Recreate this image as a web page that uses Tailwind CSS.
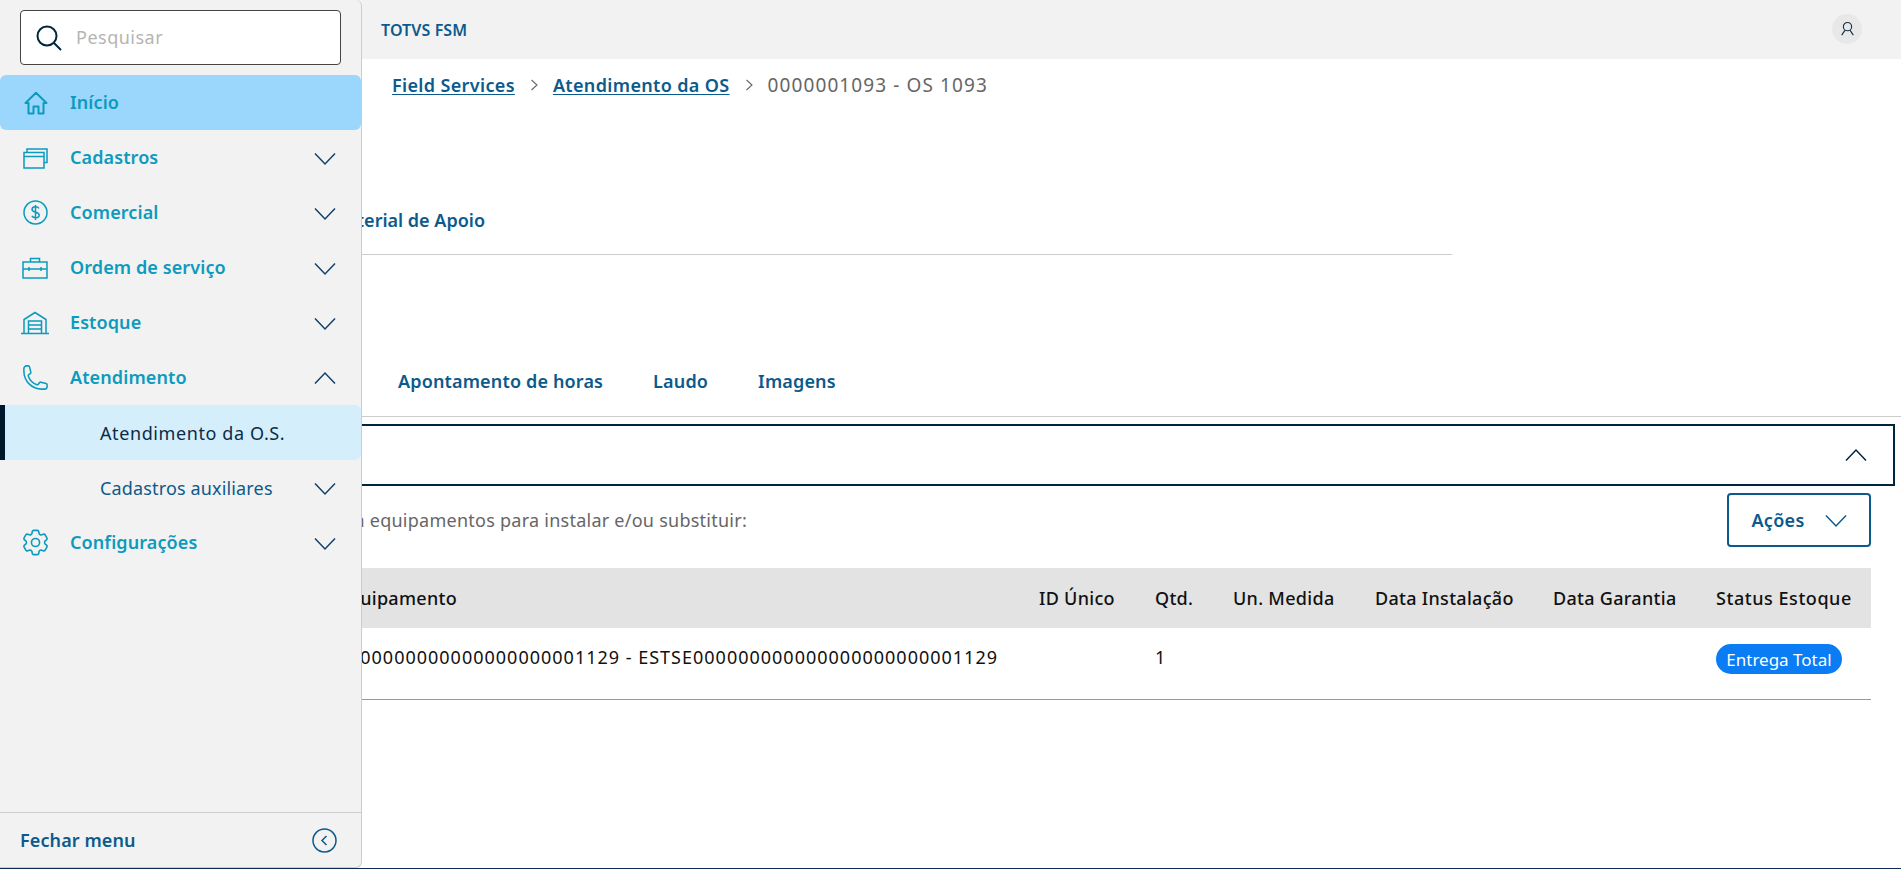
<!DOCTYPE html>
<html lang="pt-BR">
<head>
    <meta charset="UTF-8">
    <meta name="viewport" content="width=device-width, initial-scale=1.0">
    <title>TOTVS FSM</title>
    <script src="https://cdn.jsdelivr.net/npm/@tailwindcss/browser@4"></script>
</head>
<body class="relative h-screen overflow-hidden bg-white font-['Noto_Sans',sans-serif] text-[16px] text-[#111]">

    <!-- conteudo da pagina -->
    <div class="flex h-[868px] flex-col overflow-hidden">
        <header class="flex h-[59px] shrink-0 items-center justify-between bg-[#f2f2f2] pl-[381px] pr-[39px]">
            <span class="text-[16px] font-semibold tracking-[0.1px] text-[#0c5a8c]">TOTVS FSM</span>
            <div class="mb-[2px] flex h-[30px] w-[30px] items-center justify-center rounded-full bg-[#e8e8e8]">
                <svg class="h-[15px] w-[15px]" viewBox="0 0 16 16" fill="none" stroke="#12304a" stroke-width="1.2"><circle cx="8" cy="6" r="4.4"/><path d="M1.800 15 5.200 10M14.200 15 10.800 10"/></svg>
            </div>
        </header>

        <nav class="flex h-[52px] shrink-0 items-center pl-[392px] text-[18px]">
            <a class="font-semibold tracking-[0.35px] text-[#0c5a8c] underline underline-offset-2">Field Services</a>
            <svg class="mx-[14px] h-[12px] w-[10px]" viewBox="0 0 10 12" fill="none" stroke="#666" stroke-width="1.1"><path d="M2.500 1 8 6l-5.500 5"/></svg>
            <a class="font-semibold tracking-[0.35px] text-[#0c5a8c] underline underline-offset-2">Atendimento da OS</a>
            <svg class="mx-[14px] h-[12px] w-[10px]" viewBox="0 0 10 12" fill="none" stroke="#666" stroke-width="1.1"><path d="M2.500 1 8 6l-5.500 5"/></svg>
            <span class="text-[19px] tracking-[1.1px] text-[#666]">0000001093 - OS 1093</span>
        </nav>

        <div class="h-[144px] w-[1452px] shrink-0 border-b border-[#ccc]">
            <div class="flex h-[121px] w-[485px] items-end justify-end">
                <span class="text-[18px] font-semibold leading-[24px] whitespace-nowrap text-[#0c5a8c]">Material de Apoio</span>
            </div>
        </div>

        <div class="flex h-[162px] shrink-0 items-end border-b border-[#ccc] pb-[23px] pl-[398px] text-[18px] font-semibold leading-[24px] tracking-[0.15px] text-[#0c5a8c]">
            <span>Apontamento de horas</span>
            <span class="ml-[50px]">Laudo</span>
            <span class="ml-[50px]">Imagens</span>
        </div>

        <div class="mt-[7px] flex h-[62px] w-[1895px] shrink-0 items-center justify-end border-2 border-[#00263e] pr-[26px]">
            <svg class="h-[14px] w-[22px]" viewBox="0 0 22 14" fill="none" stroke="#00263e" stroke-width="1.500"><path d="M1 12.500 11 2l10 10.500"/></svg>
        </div>

        <div class="mt-[7px] flex h-[54px] w-[1871px] shrink-0 items-center justify-between">
            <div class="flex w-[747px] justify-end">
                <span class="whitespace-nowrap text-[18px] tracking-[0.25px] text-[#666]">Itens em equipamentos para instalar e/ou substituir:</span>
            </div>
            <button class="flex h-[54px] w-[144px] items-center justify-center gap-[20px] rounded border-2 border-[#0c5a8c] text-[18px] font-semibold tracking-[0.3px] text-[#0c5a8c]">
                Ações
                <svg class="mt-[1px] h-[14px] w-[22px]" viewBox="0 0 22 14" fill="none" stroke="#0c5a8c" stroke-width="1.500"><path d="M1 1.500 11 12 21 1.500"/></svg>
            </button>
        </div>

        <div class="mt-[21px] w-[1871px] shrink-0">
            <div class="grid h-[60px] grid-cols-[1039px_116px_78px_142px_178px_163px_155px] items-center bg-[#e3e3e3] text-[18px] font-medium tracking-[0.3px] whitespace-nowrap">
                <div class="pr-[582px] text-right">Equipamento</div>
                <div>ID Único</div>
                <div>Qtd.</div>
                <div>Un. Medida</div>
                <div>Data Instalação</div>
                <div>Data Garantia</div>
                <div class="tracking-[0.55px]">Status Estoque</div>
            </div>
            <div class="grid h-[72px] grid-cols-[1039px_116px_78px_142px_178px_163px_155px] items-start border-b border-[#999] pt-[16px] text-[18px] leading-[27px] whitespace-nowrap">
                <div class="overflow-hidden pr-[41px] text-right tracking-[1px]">ESTSE000000000000000000000001129 - ESTSE000000000000000000000001129</div>
                <div></div>
                <div>1</div>
                <div></div>
                <div></div>
                <div></div>
                <div><span class="inline-flex h-[30px] w-[126px] items-center justify-center rounded-full bg-[#0a7cf4] text-[17px] leading-none text-white">Entrega Total</span></div>
            </div>
        </div>
    </div>
    <div class="h-px bg-[#0b2a5b]"></div>

    <!-- menu lateral sobre o conteudo -->
    <aside class="absolute top-0 left-0 flex h-[868px] w-[362px] flex-col rounded-r-md border-r border-b border-[#ccc] bg-[#f2f2f2]">
        <div class="flex h-[75px] shrink-0 items-start px-[20px] pt-[10px]">
            <div class="flex h-[55px] w-[321px] items-center rounded border border-[#444] bg-white pl-[15px]">
                <svg class="h-[26px] w-[26px]" viewBox="0 0 26 26" fill="none" stroke="#00263e" stroke-width="2"><circle cx="11" cy="11" r="9.500"/><path d="m18 18 7 7"/></svg>
                <span class="ml-[14px] text-[18px] tracking-[0.5px] text-[#b5b5b5]">Pesquisar</span>
            </div>
        </div>

        <ul class="text-[18px] font-semibold tracking-[0.1px] text-[#0c9abe]">
            <li class="flex h-[55px] w-[361px] items-center rounded-md bg-[#9bd7fd] pl-[24px]">
                <svg class="h-[24px] w-[24px]" viewBox="0 0 24 24" fill="none" stroke="#0c9abe" stroke-width="2" stroke-linejoin="round"><path d="M1.500 12 12 1.800 22.500 12h-3v10.500h-5v-7h-5v7h-5V12z"/></svg>
                <span class="ml-[22px]">Início</span>
            </li>
            <li class="flex h-[55px] items-center pl-[23px] pr-[25px]">
                <svg class="h-[24px] w-[25px]" viewBox="0 0 25 24" fill="none" stroke="#0c9abe" stroke-width="1.500"><rect x="1" y="6.500" width="20" height="15.500"/><path d="M1 10.500h20M4 6.500V3h20v13.500h-3"/></svg>
                <span class="ml-[22px] flex-1">Cadastros</span>
                <svg class="mt-[2px] h-[14px] w-[22px]" viewBox="0 0 22 14" fill="none" stroke="#12406a" stroke-width="1.500"><path d="M1 1.500 11 12 21 1.500"/></svg>
            </li>
            <li class="flex h-[55px] items-center pl-[23px] pr-[25px]">
                <svg class="h-[25px] w-[25px]" viewBox="0 0 25 25" fill="none" stroke="#0c9abe" stroke-width="1.500"><circle cx="12.500" cy="12.500" r="11.500"/><path d="M16 8.500c-.5-1-2-1.700-3.500-1.700-2 0-3.500 1-3.500 2.700 0 3.600 7.200 1.800 7.200 5.400 0 1.700-1.700 2.800-3.700 2.800-1.600 0-3-.7-3.600-1.800M12.500 5v15"/></svg>
                <span class="ml-[22px] flex-1">Comercial</span>
                <svg class="mt-[2px] h-[14px] w-[22px]" viewBox="0 0 22 14" fill="none" stroke="#12406a" stroke-width="1.500"><path d="M1 1.500 11 12 21 1.500"/></svg>
            </li>
            <li class="flex h-[55px] items-center pl-[22px] pr-[25px]">
                <svg class="h-[24px] w-[26px]" viewBox="0 0 26 24" fill="none" stroke="#0c9abe" stroke-width="1.500"><rect x="1" y="6" width="24" height="16"/><path d="M8.500 6V2.500h9V6M1 13h24M7 11v4M19 11v4"/></svg>
                <span class="ml-[22px] flex-1">Ordem de serviço</span>
                <svg class="mt-[2px] h-[14px] w-[22px]" viewBox="0 0 22 14" fill="none" stroke="#12406a" stroke-width="1.500"><path d="M1 1.500 11 12 21 1.500"/></svg>
            </li>
            <li class="flex h-[55px] items-center pl-[21px] pr-[25px]">
                <svg class="h-[24px] w-[28px]" viewBox="0 0 28 24" fill="none" stroke="#0c9abe" stroke-width="1.500"><path d="M0 22.500h28M3 22.500V8.500L14 1.500l11 7v14M7.500 22.500V10h13v12.500M7.500 14h13M7.500 18h13"/></svg>
                <span class="ml-[21px] flex-1">Estoque</span>
                <svg class="mt-[2px] h-[14px] w-[22px]" viewBox="0 0 22 14" fill="none" stroke="#12406a" stroke-width="1.500"><path d="M1 1.500 11 12 21 1.500"/></svg>
            </li>
            <li class="flex h-[55px] items-center pl-[23px] pr-[25px]">
                <svg class="h-[25px] w-[25px]" viewBox="1.500 1.500 21 21" fill="none" stroke="#0c9abe" stroke-width="1.300"><path d="M2.250 6.750c0 8.284 6.716 15 15 15h2.250a2.250 2.250 0 002.250-2.250v-1.372c0-.516-.351-.966-.852-1.091l-4.423-1.106c-.44-.11-.902.055-1.173.417l-.97 1.293c-.282.376-.769.542-1.210.38a12.035 12.035 0 01-7.143-7.143c-.162-.441.004-.928.38-1.210l1.293-.97c.363-.271.527-.734.417-1.173L6.963 3.102a1.125 1.125 0 00-1.091-.852H4.500A2.250 2.250 0 002.250 4.500v2.250z"/></svg>
                <span class="ml-[22px] flex-1">Atendimento</span>
                <svg class="h-[14px] w-[22px]" viewBox="0 0 22 14" fill="none" stroke="#12406a" stroke-width="1.500"><path d="M1 12.500 11 2l10 10.500"/></svg>
            </li>
            <li class="flex h-[55px] w-[361px] items-center rounded-r-md border-l-[5px] border-[#00172b] bg-[#d5eefc] pl-[95px] pt-[1px] font-normal tracking-[0.6px] text-[#0b2b48]">
                Atendimento da O.S.
            </li>
            <li class="flex h-[55px] items-center pl-[100px] pr-[25px] font-normal text-[#0c5a8c]">
                <span class="flex-1 pt-[1px] tracking-[0.15px]">Cadastros auxiliares</span>
                <svg class="mt-[2px] h-[14px] w-[22px]" viewBox="0 0 22 14" fill="none" stroke="#12406a" stroke-width="1.500"><path d="M1 1.500 11 12 21 1.500"/></svg>
            </li>
            <li class="flex h-[55px] items-center pl-[22px] pr-[25px]">
                <svg class="h-[27px] w-[27px]" viewBox="2 2 20 20" fill="none" stroke="#0c9abe" stroke-width="1.200"><path d="M9.594 3.940c.09-.542.56-.94 1.110-.94h2.593c.55 0 1.020.398 1.110.94l.213 1.281c.063.374.313.686.645.87.074.04.147.083.22.127.324.196.72.257 1.075.124l1.217-.456a1.125 1.125 0 011.370.49l1.296 2.247a1.125 1.125 0 01-.26 1.431l-1.003.827c-.293.24-.438.613-.431.992a6.759 6.759 0 010 .255c-.007.378.138.75.43.99l1.005.828c.424.35.534.954.26 1.430l-1.298 2.247a1.125 1.125 0 01-1.369.491l-1.217-.456c-.355-.133-.75-.072-1.076.124a6.570 6.570 0 01-.22.128c-.331.183-.581.495-.644.869l-.213 1.280c-.09.543-.56.941-1.110.941h-2.594c-.55 0-1.020-.398-1.110-.94l-.213-1.281c-.062-.374-.312-.686-.644-.87a6.520 6.520 0 01-.22-.127c-.325-.196-.72-.257-1.076-.124l-1.217.456a1.125 1.125 0 01-1.369-.49l-1.297-2.247a1.125 1.125 0 01.26-1.431l1.004-.827c.292-.24.437-.613.43-.992a6.932 6.932 0 010-.255c.007-.378-.138-.75-.43-.99l-1.004-.828a1.125 1.125 0 01-.26-1.430l1.297-2.247a1.125 1.125 0 011.370-.491l1.216.456c.356.133.751.072 1.076-.124.072-.044.146-.087.22-.128.332-.183.582-.495.644-.869l.214-1.281z"/><circle cx="12" cy="12" r="3"/></svg>
                <span class="ml-[21px] flex-1">Configurações</span>
                <svg class="mt-[2px] h-[14px] w-[22px]" viewBox="0 0 22 14" fill="none" stroke="#12406a" stroke-width="1.500"><path d="M1 1.500 11 12 21 1.500"/></svg>
            </li>
        </ul>

        <div class="mt-auto flex h-[55px] items-center justify-between border-t border-[#ccc] pl-[20px] pr-[24px]">
            <span class="pt-[1px] text-[18px] font-semibold tracking-[0.1px] text-[#0c5a8c]">Fechar menu</span>
            <svg class="h-[25px] w-[25px]" viewBox="0 0 25 25" fill="none" stroke="#0c5a8c" stroke-width="1.500"><circle cx="12.500" cy="12.500" r="11.500"/><path d="M14.500 8 10 12.500l4.500 4.500"/></svg>
        </div>
    </aside>

</body>
</html>
